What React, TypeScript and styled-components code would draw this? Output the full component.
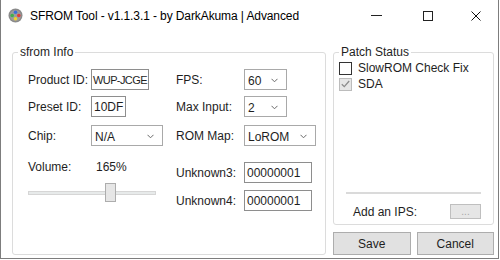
import React from 'react';
import styled, { createGlobalStyle } from 'styled-components';

const GlobalStyle = createGlobalStyle`
  html, body {
    margin: 0;
    padding: 0;
    background: #fff;
  }
  body {
    font-family: "Liberation Sans", Arial, sans-serif;
    font-size: 12px;
    color: #1e1e1e;
  }
`;

function Chevron() {
  return (
    <svg width="7" height="5" viewBox="0 0 7 5">
      <path d="M0.5 0.8 L3.5 3.8 L6.5 0.8" fill="none" stroke="#6a6a6a" strokeWidth="1" />
    </svg>
  );
}

function AppIcon() {
  return (
    <svg width="15" height="15" viewBox="0 0 15 15">
      <circle cx="7.5" cy="7.5" r="7" fill="#8a8a8a" />
      <circle cx="7.5" cy="7.5" r="5.6" fill="#9c9c9c" />
      <circle cx="7.5" cy="4.2" r="1.8" fill="#3a6fd8" />
      <circle cx="4.2" cy="7.5" r="1.8" fill="#3fb04a" />
      <circle cx="10.8" cy="7.5" r="1.8" fill="#e03b3b" />
      <circle cx="7.5" cy="10.8" r="1.8" fill="#f2d22a" />
    </svg>
  );
}

function App() {
  return (
    <>
      <GlobalStyle />
      <Window>
        <TitleBar>
          <IconSlot>
            <AppIcon />
          </IconSlot>
          <Title>SFROM Tool - v1.1.3.1 - by DarkAkuma | Advanced</Title>
          <Controls>
            <ControlButton $width={51}>
              <MinGlyph />
            </ControlButton>
            <ControlButton $width={51}>
              <MaxGlyph />
            </ControlButton>
            <ControlButton $width={45}>
              <svg width="10" height="10" viewBox="0 0 10 10">
                <path d="M0.5 0.5 L9.5 9.5 M9.5 0.5 L0.5 9.5" stroke="#111" strokeWidth="1" />
              </svg>
            </ControlButton>
          </Controls>
        </TitleBar>

        <Body>
          <InfoGroup>
            <Legend>sfrom Info</Legend>
            <InfoInner>
              <Column $width={135}>
                <FieldRow $top={9}>
                  <Label $width={63}>Product ID:</Label>
                  <TextBox $width={58} $tight>WUP-JCGE</TextBox>
                </FieldRow>
                <FieldRow $top={6}>
                  <Label $width={63}>Preset ID:</Label>
                  <TextBox $width={35}>10DF</TextBox>
                </FieldRow>
                <FieldRow $top={8}>
                  <Label $width={63}>Chip:</Label>
                  <Combo $width={72}>
                    N/A
                    <Chevron />
                  </Combo>
                </FieldRow>
                <VolumeRow>
                  <Label $width={68}>Volume:</Label>
                  <span>165%</span>
                </VolumeRow>
                <Slider>
                  <Track />
                  <Thumb style={{ left: 77 }} />
                </Slider>
              </Column>
              <Column $width={140}>
                <FieldRow $top={9}>
                  <Label $width={68}>FPS:</Label>
                  <Combo $width={43}>
                    60
                    <Chevron />
                  </Combo>
                </FieldRow>
                <FieldRow $top={6}>
                  <Label $width={68}>Max Input:</Label>
                  <Combo $width={43}>
                    2
                    <Chevron />
                  </Combo>
                </FieldRow>
                <FieldRow $top={8}>
                  <Label $width={68}>ROM Map:</Label>
                  <Combo $width={72}>
                    LoROM
                    <Chevron />
                  </Combo>
                </FieldRow>
                <FieldRow $top={16}>
                  <Label $width={68}>Unknown3:</Label>
                  <TextBox $width={68}>00000001</TextBox>
                </FieldRow>
                <FieldRow $top={7}>
                  <Label $width={68}>Unknown4:</Label>
                  <TextBox $width={68}>00000001</TextBox>
                </FieldRow>
              </Column>
            </InfoInner>
          </InfoGroup>

          <SideColumn>
            <PatchGroup>
              <Legend>Patch Status</Legend>
              <PatchInner>
                <CheckRow>
                  <CheckBox />
                  <span>SlowROM Check Fix</span>
                </CheckRow>
                <CheckRow>
                  <CheckBox $checked $disabled>
                    <svg width="9" height="8" viewBox="0 0 9 8">
                      <path d="M0.8 4.2 L3.3 6.6 L8.2 1" fill="none" stroke="#8c8c8c" strokeWidth="1.3" />
                    </svg>
                  </CheckBox>
                  <span>SDA</span>
                </CheckRow>
                <Spacer />
                <Separator />
                <IpsRow>
                  <span>Add an IPS:</span>
                  <SmallButton>...</SmallButton>
                </IpsRow>
              </PatchInner>
            </PatchGroup>
            <ButtonRow>
              <PushButton>Save</PushButton>
              <PushButton>Cancel</PushButton>
            </ButtonRow>
          </SideColumn>
        </Body>
      </Window>
    </>
  );
}

const Window = styled.div`
  width: 499px;
  height: 259px;
  box-sizing: border-box;
  border: 1px solid #7d7d7d;
  border-top: none;
  background: #fff;
  display: flex;
  flex-direction: column;
`;

const TitleBar = styled.div`
  height: 31px;
  display: flex;
  align-items: center;
  flex-shrink: 0;
`;

const IconSlot = styled.div`
  width: 15px;
  height: 15px;
  margin-left: 7px;
  margin-right: 7px;
  display: flex;
`;

const Title = styled.div`
  flex: 1;
  color: #000;
  white-space: nowrap;
  letter-spacing: -0.1px;
`;

const Controls = styled.div`
  display: flex;
  height: 100%;
`;

const ControlButton = styled.div<{ $width: number }>`
  width: ${(p) => p.$width}px;
  height: 100%;
  display: flex;
  align-items: center;
  justify-content: center;
`;

const MinGlyph = styled.div`
  width: 11px;
  height: 1px;
  background: #222;
`;

const MaxGlyph = styled.div`
  width: 10px;
  height: 10px;
  box-sizing: border-box;
  border: 1px solid #222;
`;

const Body = styled.div`
  display: flex;
  gap: 7px;
  padding: 13px 0 0 11px;
`;

const GroupBox = styled.fieldset`
  margin: 0;
  padding: 0;
  min-width: 0;
  border: 1px solid #dcdcdc;
  border-radius: 3px;
  box-sizing: border-box;
`;

const Legend = styled.legend`
  margin-left: 5px;
  padding: 0 2px;
  line-height: 16px;
  color: #1e1e1e;
`;

const InfoGroup = styled(GroupBox)`
  width: 314px;
`;

const InfoInner = styled.div`
  height: 163px;
  display: flex;
  gap: 13px;
  padding-left: 15px;
`;

const Column = styled.div<{ $width: number }>`
  width: ${(p) => p.$width}px;
  display: flex;
  flex-direction: column;
`;

const FieldRow = styled.div<{ $top: number }>`
  display: flex;
  align-items: center;
  height: 21px;
  margin-top: ${(p) => p.$top}px;
`;

const Label = styled.div<{ $width: number }>`
  width: ${(p) => p.$width}px;
  flex-shrink: 0;
  white-space: nowrap;
`;

const TextBox = styled.div<{ $width: number; $tight?: boolean }>`
  width: ${(p) => p.$width}px;
  height: 21px;
  box-sizing: border-box;
  border: 1px solid #8e8e8e;
  padding: 0 ${(p) => (p.$tight ? 1 : 2)}px;
  display: flex;
  align-items: center;
  white-space: nowrap;
  overflow: hidden;
  background: #fff;
  font-size: ${(p) => (p.$tight ? 11 : 12)}px;
  letter-spacing: ${(p) => (p.$tight ? -0.6 : 0)}px;
`;

const Combo = styled.div<{ $width: number }>`
  width: ${(p) => p.$width}px;
  height: 21px;
  box-sizing: border-box;
  border: 1px solid #a9a9a9;
  padding: 2px 8px 0 3px;
  display: flex;
  align-items: center;
  justify-content: space-between;
  background: #fff;
`;

const VolumeRow = styled.div`
  display: flex;
  align-items: center;
  height: 16px;
  margin-top: 13px;
`;

const Slider = styled.div`
  position: relative;
  width: 128px;
  height: 19px;
  margin-top: 8px;
  display: flex;
  align-items: center;
`;

const Track = styled.div`
  width: 100%;
  height: 4px;
  box-sizing: border-box;
  background: #e7eaea;
  border: 1px solid #d6d6d6;
`;

const Thumb = styled.div`
  position: absolute;
  top: 0;
  width: 11px;
  height: 19px;
  box-sizing: border-box;
  background: #e6e6e6;
  border: 1px solid #adadad;
`;

const SideColumn = styled.div`
  width: 161px;
  display: flex;
  flex-direction: column;
`;

const PatchGroup = styled(GroupBox)`
  width: 161px;
`;

const PatchInner = styled.div`
  height: 164px;
  display: flex;
  flex-direction: column;
  padding-left: 5px;
`;

const CheckRow = styled.div`
  height: 16px;
  display: flex;
  align-items: center;
  gap: 6px;
  white-space: nowrap;
`;

const CheckBox = styled.div<{ $checked?: boolean; $disabled?: boolean }>`
  width: 13px;
  height: 13px;
  box-sizing: border-box;
  border: 1px solid ${(p) => (p.$disabled ? '#bcbcbc' : '#333')};
  background: ${(p) => (p.$disabled ? '#e6e6e6' : '#fff')};
  display: flex;
  align-items: center;
  justify-content: center;
  flex-shrink: 0;
`;

const Spacer = styled.div`
  flex: 1;
`;

const Separator = styled.div`
  height: 2px;
  margin: 0 12px 0 7px;
  background: #dadada;
`;

const IpsRow = styled.div`
  display: flex;
  align-items: center;
  justify-content: space-between;
  height: 15px;
  margin: 10px 12px 5px 14px;
`;

const SmallButton = styled.div`
  width: 31px;
  height: 15px;
  box-sizing: border-box;
  border: 1px solid #bfbfbf;
  background: #e6e6e6;
  color: #a6a6a6;
  font-size: 10px;
  display: flex;
  align-items: center;
  justify-content: center;
  line-height: 1;
`;

const ButtonRow = styled.div`
  display: flex;
  gap: 6px;
  margin-top: 7px;
`;

const PushButton = styled.div`
  flex: 1;
  height: 23px;
  box-sizing: border-box;
  border: 1px solid #adadad;
  background: #e1e1e1;
  display: flex;
  align-items: center;
  justify-content: center;
  color: #1e1e1e;
`;

export default App;
